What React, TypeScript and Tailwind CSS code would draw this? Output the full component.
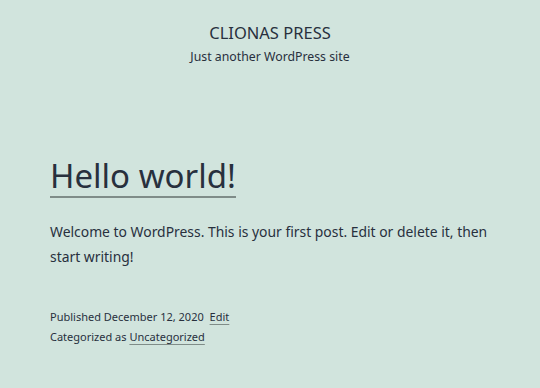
export default function App() {
  return (
    <div
      className="min-h-[388px] bg-[#d1e4dd] text-[#28303d]"
      style={{ fontFamily: '"Noto Sans", "Open Sans", sans-serif' }}
    >
      <header className="flex flex-col items-center pt-[22px]">
        <p className="text-[16.5px] leading-[22px] uppercase">Clionas Press</p>
        <p className="mt-[4px] text-[12.3px] leading-[18px]">Just another WordPress site</p>
      </header>

      <main className="px-[50px] pt-[90px]">
        <h1 className="inline-block border-b-[2px] border-[#7f8c88] text-[33px] leading-[40px]">
          Hello world!
        </h1>
        <p className="mt-[21px] max-w-[450px] text-[13.9px] leading-[25px]">
          Welcome to WordPress. This is your first post. Edit or delete it, then start writing!
        </p>
        <div className="mt-[38px] text-[11px] leading-[20px]">
          <p>
            Published December 12, 2020{" "}
            <a href="#" className="ml-[3px] underline underline-offset-[3px] decoration-[#7f8c88]">
              Edit
            </a>
          </p>
          <p>
            Categorized as{" "}
            <a href="#" className="underline underline-offset-[3px] decoration-[#7f8c88]">
              Uncategorized
            </a>
          </p>
        </div>
      </main>
    </div>
  );
}
